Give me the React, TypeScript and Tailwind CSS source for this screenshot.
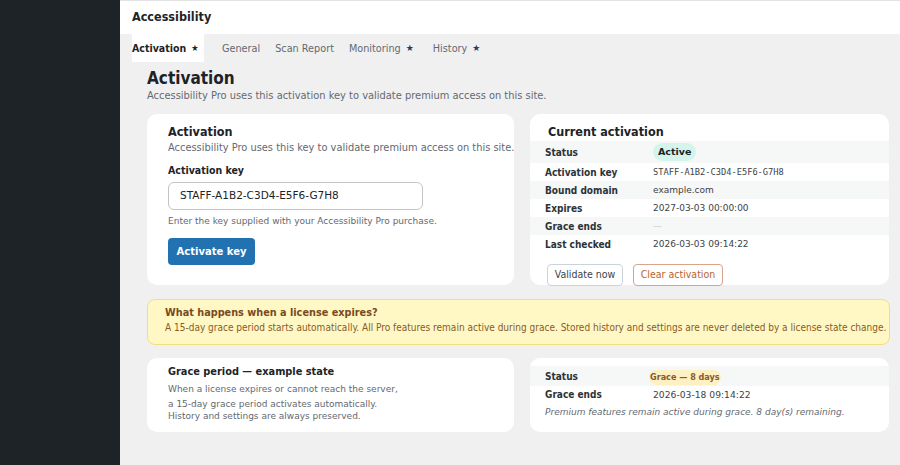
import React from 'react';

const tabs = [
  { label: 'Activation', star: true, active: true },
  { label: 'General', star: false },
  { label: 'Scan Report', star: false },
  { label: 'Monitoring', star: true },
  { label: 'History', star: true },
];

const rows = [
  { label: 'Status', pill: 'Active' },
  { label: 'Activation key', value: 'STAFF-A1B2-C3D4-E5F6-G7H8', mono: true },
  { label: 'Bound domain', value: 'example.com' },
  { label: 'Expires', value: '2027-03-03 00:00:00' },
  { label: 'Grace ends', value: '—', muted: true },
  { label: 'Last checked', value: '2026-03-03 09:14:22' },
];

const cond = "font-['DejaVu_Sans_Condensed',sans-serif]";

export default function App() {
  return (
    <div className="flex h-[465px] w-[900px] overflow-hidden bg-[#f0f0f1] font-['DejaVu_Sans',sans-serif] text-[#1d2327]">
      {/* Admin sidebar */}
      <div className="w-[120px] shrink-0 bg-[#1d2327]" />

      <div className="flex min-w-0 flex-1 flex-col">
        {/* Header */}
        <div className={`flex h-[34px] items-center border-t border-[#e2e2e2] bg-white pl-3 text-[12.5px] font-bold ${cond}`}>
          Accessibility
        </div>

        {/* Tabs */}
        <div className="flex h-[28px] items-stretch pl-3 text-[9.7px]">
          {tabs.map((t) =>
            t.active ? (
              <div key={t.label} className={`mr-[18px] flex w-[72px] items-center bg-white pt-[2px] text-[10.5px] font-bold text-[#1d2327] ${cond}`}>
                {t.label}
                <span className="ml-[5px] text-[9px]">★</span>
              </div>
            ) : (
              <div key={t.label} className={`flex items-center pt-[2px] text-[#646970] ${t.star ? 'mr-[19px]' : 'mr-[15px]'}`}>
                {t.label}
                {t.star && <span className="ml-[5px] text-[9px] text-[#2c3a66]">★</span>}
              </div>
            )
          )}
        </div>

        <div className="pl-[27px] pr-[11px]">
          {/* Page title */}
          <h1 className={`mt-[5px] text-[17px] font-bold leading-[22px] ${cond}`}>Activation</h1>
          <p className="text-[9.9px] leading-[13px] text-[#646970]">
            Accessibility Pro uses this activation key to validate premium access on this site.
          </p>

          {/* Top cards */}
          <div className="mt-[12px] grid grid-cols-[367px_359px] gap-[16px]">
            <div className="h-[171px] rounded-[10px] bg-white pl-[21px] pt-[10px]">
              <h2 className={`text-[12.5px] font-bold leading-[16px] ${cond}`}>Activation</h2>
              <p className="mt-[1px] whitespace-nowrap text-[9.85px] leading-[13px] text-[#646970]">
                Accessibility Pro uses this key to validate premium access on this site.
              </p>
              <label className={`mt-[10px] block text-[10.5px] font-bold leading-[13px] ${cond}`}>Activation key</label>
              <div className="mt-[5px] flex h-[28px] w-[255px] items-center rounded-[6px] border border-[#c3c4c7] pl-[11px] text-[10.5px]">
                STAFF-A1B2-C3D4-E5F6-G7H8
              </div>
              <p className="mt-[5px] text-[9px] leading-[12px] text-[#646970]">
                Enter the key supplied with your Accessibility Pro purchase.
              </p>
              <button className="mt-[11px] h-[27px] w-[87px] rounded-[4px] bg-[#2271b1] text-[10px] font-bold text-white">
                Activate key
              </button>
            </div>

            <div className="h-[171px] rounded-[10px] bg-white pt-[10px]">
              <h2 className={`pl-[18px] text-[12.5px] font-bold leading-[16px] ${cond}`}>Current activation</h2>
              <div className="mt-[1px] text-[9px]">
                {rows.map((r, i) => (
                  <div
                    key={r.label}
                    className={`flex items-center pl-[15px] ${i === 0 ? 'h-[22px]' : 'h-[18px]'} ${i % 2 === 0 ? 'bg-[#f6f7f7]' : ''}`}
                  >
                    <span className={`w-[108px] text-[10px] font-bold text-[#2c3338] ${cond}`}>{r.label}</span>
                    {r.pill ? (
                      <span className="rounded-full bg-[#d5f5ec] px-[5px] py-[2px] text-[9.5px] font-bold text-[#1d2327]">
                        {r.pill}
                      </span>
                    ) : (
                      <span
                        className={
                          r.mono
                            ? "mt-[1px] font-['DejaVu_Sans_Mono',monospace] text-[8.7px] text-[#3c434a]"
                            : r.muted
                              ? 'mt-[2px] text-[#c3c4c7]'
                              : 'mt-[2px] text-[#3c434a]'
                        }
                      >
                        {r.value}
                      </span>
                    )}
                  </div>
                ))}
              </div>
              <div className={`mt-[11px] flex gap-[10px] pl-[17px] text-[10.5px] ${cond}`}>
                <button className="h-[22px] w-[76px] rounded-[4px] border border-[#c9d3da] bg-white text-[#3c434a]">
                  Validate now
                </button>
                <button className="h-[22px] w-[90px] rounded-[4px] border border-[#d6a58b] bg-white text-[#b8652e]">
                  Clear activation
                </button>
              </div>
            </div>
          </div>

          {/* Notice */}
          <div className={`mt-[14px] h-[46px] w-[743px] rounded-[8px] border border-[#f2df7c] bg-[#fff8c4] pl-[17px] pt-[6px] text-[#7a4a1e] ${cond}`}>
            <p className="text-[10.8px] font-bold leading-[14px]">What happens when a license expires?</p>
            <p className="mt-[1px] whitespace-nowrap text-[10px] leading-[14px] text-[#8a5a28]">
              A 15-day grace period starts automatically. All Pro features remain active during grace. Stored history and settings are never deleted by a license state change.
            </p>
          </div>

          {/* Bottom cards */}
          <div className="mt-[13px] grid grid-cols-[367px_359px] gap-[16px]">
            <div className="h-[74px] rounded-[10px] bg-white pl-[21px] pt-[7px]">
              <h3 className="text-[9.8px] font-bold leading-[14px]">Grace period — example state</h3>
              <p className="mt-[4px] text-[9px] leading-[12px] text-[#646970]">
                When a license expires or cannot reach the server,
              </p>
              <p className="mt-[3px] text-[9px] leading-[12px] text-[#646970]">
                a 15-day grace period activates automatically.
                <br />
                History and settings are always preserved.
              </p>
            </div>

            <div className="h-[74px] rounded-[10px] bg-white pt-[8px] text-[9.2px]">
              <div className="flex h-[20px] items-center bg-[#f6f7f7] pl-[15px]">
                <span className={`w-[104px] text-[10px] font-bold text-[#2c3338] ${cond}`}>Status</span>
                <span className={`mt-[3px] rounded-full bg-[#fdf0c2] px-[1px] py-[1px] text-[9px] font-bold text-[#8a5a28] ${cond}`}>
                  Grace — 8 days
                </span>
              </div>
              <div className="flex h-[17px] items-center pl-[15px]">
                <span className={`w-[108px] text-[10px] font-bold text-[#2c3338] ${cond}`}>Grace ends</span>
                <span className="mt-[1px] text-[#3c434a]">2026-03-18 09:14:22</span>
              </div>
              <p className="mt-[3px] pl-[15px] text-[9px] italic text-[#646970]">
                Premium features remain active during grace. 8 day(s) remaining.
              </p>
            </div>
          </div>
        </div>
      </div>
    </div>
  );
}
